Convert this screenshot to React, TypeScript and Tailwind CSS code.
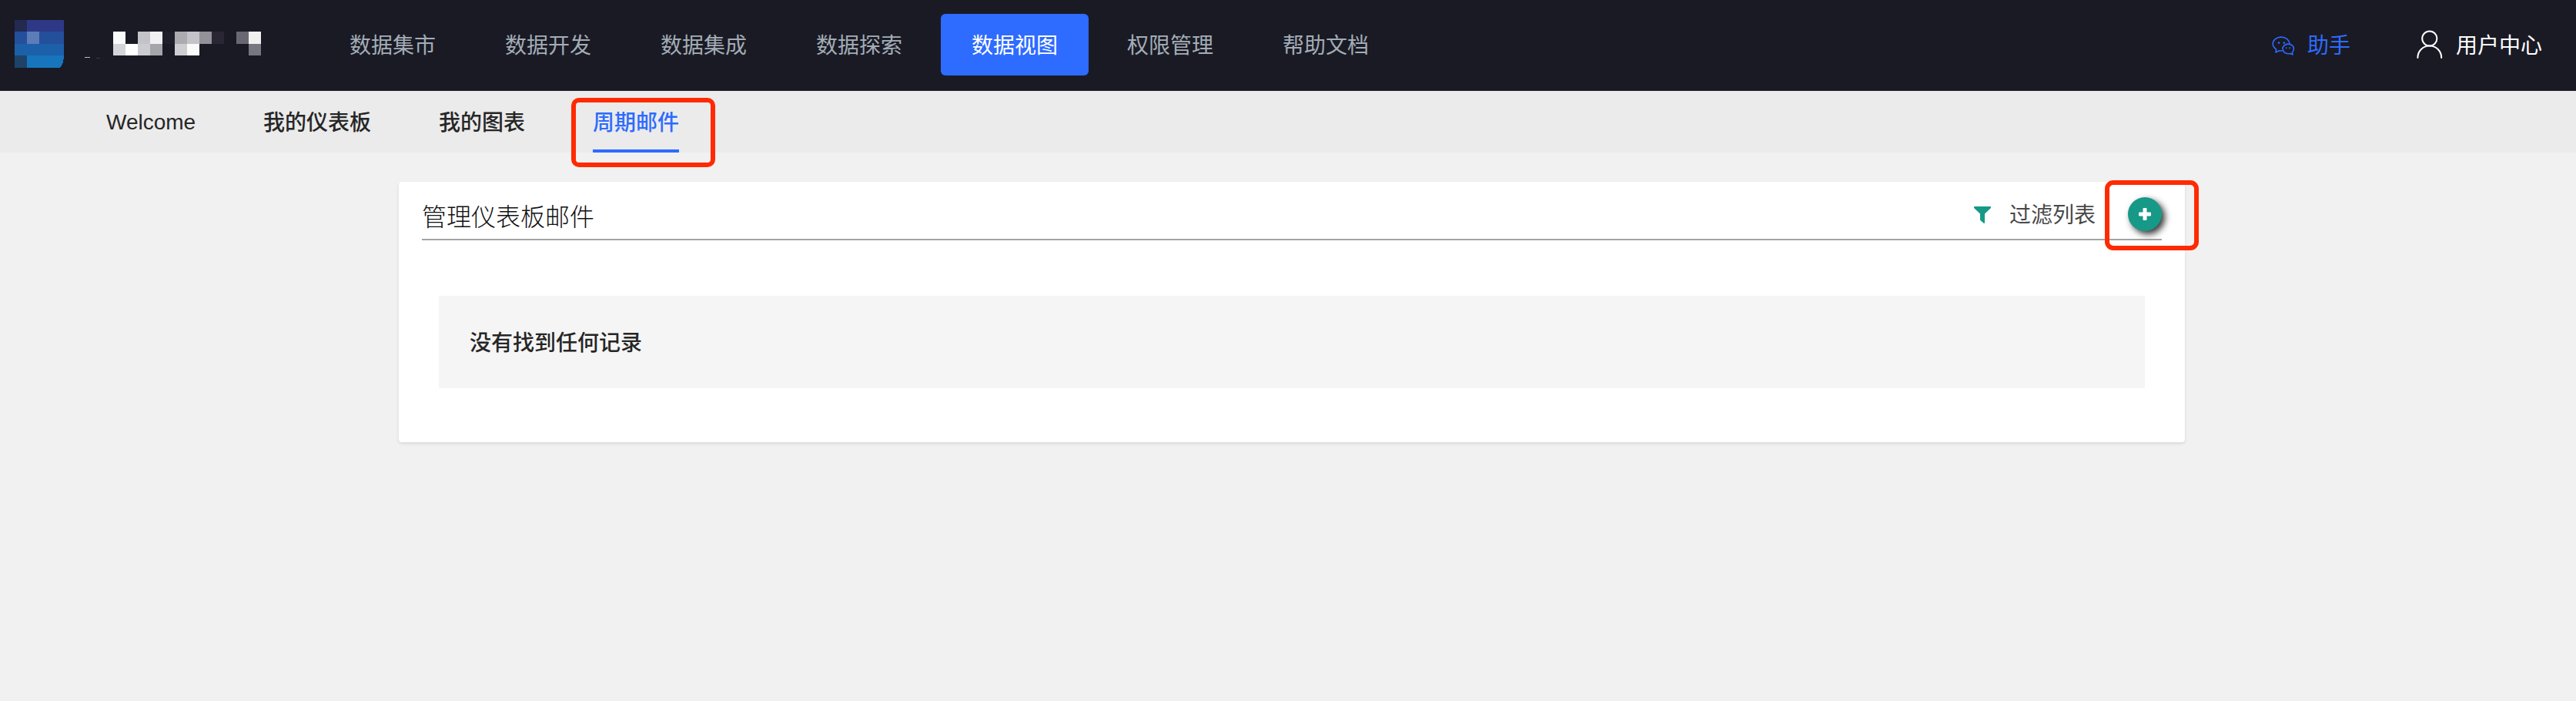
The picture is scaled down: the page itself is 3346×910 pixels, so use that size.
import React from "react";

const navItems = ["数据集市", "数据开发", "数据集成", "数据探索", "数据视图", "权限管理", "帮助文档"];
const activeNav = "数据视图";

function Logo() {
  return (
    <svg className="block h-[118px] w-[414px] shrink-0" viewBox="0 0 414 118" shapeRendering="crispEdges">
      <rect x="19" y="26" width="16" height="15" fill="#232a52" />
      <rect x="35" y="26" width="48" height="15" fill="#2d3987" />
      <rect x="19" y="41" width="64" height="16" fill="#244f9b" />
      <rect x="35" y="41" width="16" height="16" fill="#5d7db8" />
      <rect x="19" y="57" width="64" height="15" fill="#1d60aa" />
      <rect x="19" y="72" width="16" height="16" fill="#1d4468" />
      <path d="M35 72H83V74Q82 84 78 88H35Z" fill="#1675bd" />
      <rect x="110" y="74" width="7" height="1" fill="#b9b9bd" />
      <rect x="125" y="75" width="5" height="1" fill="#3b3b45" />
      <rect x="147" y="41" width="16" height="16" fill="#fafafa" />
      <rect x="179" y="41" width="16" height="16" fill="#c4c3c9" />
      <rect x="195" y="41" width="16" height="16" fill="#f0f0f3" />
      <rect x="147" y="57" width="16" height="15" fill="#d4d5d9" />
      <rect x="163" y="57" width="16" height="15" fill="#ffffff" />
      <rect x="179" y="57" width="16" height="15" fill="#cccbd0" />
      <rect x="195" y="57" width="16" height="15" fill="#a5a6ab" />
      <rect x="211" y="41" width="16" height="16" fill="#1f1e2b" />
      <rect x="227" y="41" width="16" height="16" fill="#ababb0" />
      <rect x="243" y="41" width="16" height="16" fill="#c4c3c9" />
      <rect x="259" y="41" width="16" height="16" fill="#93929b" />
      <rect x="275" y="41" width="16" height="16" fill="#282733" />
      <rect x="227" y="57" width="16" height="15" fill="#cecdd2" />
      <rect x="243" y="57" width="16" height="15" fill="#fafafa" />
      <rect x="307" y="41" width="16" height="16" fill="#696872" />
      <rect x="323" y="41" width="16" height="16" fill="#f0f0f0" />
      <rect x="323" y="57" width="16" height="15" fill="#777681" />
    </svg>
  );
}

function ChatIcon() {
  return (
    <svg className="block h-[28px] w-[30px]" viewBox="0 0 30 28" fill="none" stroke="#2e6bff" strokeWidth="1.6" strokeLinejoin="round">
      <path d="M13.6 20.8C12 21.2 10.6 21.1 9.6 20.8L5 23L5.6 18.9C2.8 17 1.2 14.7 1.2 12C1.2 6.9 6.2 3.1 12 3.1C18 3.1 22.6 6.9 23 11.8" />
      <path d="M21.2 12.1C17.2 12.1 14 14.9 14 18.3C14 21.9 17.2 24.8 21.2 24.8C22.2 24.8 23 24.7 23.8 24.4L27 25.8L26.4 23C27.8 21.8 28.4 20.1 28.4 18.3C28.4 14.9 25.2 12.1 21.2 12.1Z" />
      <g fill="#2e6bff" stroke="none">
        <circle cx="9" cy="10.6" r="1.3" />
        <circle cx="15.8" cy="10.6" r="1.3" />
        <circle cx="18.7" cy="17.3" r="1" />
        <circle cx="23" cy="17.3" r="1" />
      </g>
    </svg>
  );
}

function UserIcon() {
  return (
    <svg className="block h-[38px] w-[34px]" viewBox="0 0 34 38" fill="none" stroke="#fff" strokeWidth="2" strokeLinecap="round">
      <circle cx="16.8" cy="11" r="9.6" />
      <path d="M1.4 36C1.4 27.2 8.2 20.6 16.8 20.6S32.2 27.2 32.2 36" />
    </svg>
  );
}

function Header() {
  return (
    <header className="flex h-[118px] items-center bg-[#1a1a25] text-[28px] leading-10">
      <Logo />
      <nav className="flex gap-2.5 pb-0.5">
        {navItems.map((item) => (
          <a
            key={item}
            className={
              item === activeNav
                ? "flex h-20 w-48 items-center justify-center rounded-md bg-[#2e6bff] pt-[3px] text-white"
                : "flex h-20 w-48 items-center justify-center pt-[3px] text-[#a3adb5]"
            }
          >
            {item}
          </a>
        ))}
      </nav>
      <div className="ml-auto flex items-center pr-[44px]">
        <ChatIcon />
        <span className="ml-4 pt-px text-[#2e6bff]">助手</span>
        <span className="ml-[86px] pb-0.5">
          <UserIcon />
        </span>
        <span className="ml-[17px] pt-px text-white">用户中心</span>
      </div>
    </header>
  );
}

function Tabs() {
  return (
    <div className="flex h-20 gap-[88px] bg-[#ebebeb] pl-[138px] text-[28px] font-medium text-[#262626]">
      <a className="flex w-[116px] items-center pt-0.5 font-normal whitespace-nowrap">Welcome</a>
      <a className="flex items-center pt-[3px]">我的仪表板</a>
      <a className="flex items-center pt-[3px]">我的图表</a>
      <a className="relative flex items-center border-b-4 border-[#2e6bff] pt-[7px] text-[#2e6bff]">
        周期邮件
        <span className="absolute top-[9px] -left-7 h-[90px] w-[187px] rounded-[10px] border-6 border-[#ff2a00]" />
      </a>
    </div>
  );
}

function AddButton() {
  return (
    <button className="relative ml-[42px] flex size-11 items-center justify-center rounded-full bg-[#179987] shadow-[4px_4px_8px_rgba(0,0,0,0.8)]">
      <svg className="block size-4" viewBox="0 0 16 16" fill="#fff">
        <rect x="0" y="5.5" width="16" height="5" rx="1.2" />
        <rect x="5.5" y="0" width="5" height="16" rx="1.2" />
      </svg>
      <span className="absolute -top-[22px] -left-[30px] h-[91px] w-[122px] rounded-[11px] border-6 border-[#ff2a00]" />
    </button>
  );
}

export default function App() {
  return (
    <div className="min-h-[910px] w-full bg-[#f1f1f1] font-['Liberation_Sans','Noto_Sans_CJK_SC',sans-serif]">
      <Header />
      <Tabs />
      <main className="mt-[38px] ml-[518px] h-[338px] w-[2320px] rounded bg-white px-[30px] shadow-[0_2px_4px_rgba(0,0,0,0.1)]">
        <div className="flex h-[76px] items-center border-b-2 border-[#a3a3a3] pt-[18px] pb-[8px]">
          <h1 className="pt-[7px] text-[32px] leading-[40px] font-light text-[#111111]">管理仪表板邮件</h1>
          <div className="ml-auto flex items-center">
            <svg className="mt-0.5 block h-[22px] w-[22px]" viewBox="0 0 22 22" fill="#179987">
              <path d="M.8 0H21.2Q22 0 22 1V2L14 9.6V21.2Q14 22 13 22L8.6 18.2Q8 17.7 8 17V9.6L0 2V1Q0 0 .8 0Z" />
            </svg>
            <span className="ml-6 pt-1 text-[28px] leading-10 font-normal text-[#484848]">过滤列表</span>
            <AddButton />
          </div>
        </div>
        <div className="mx-[22px] mt-[72px] flex h-[120px] items-center bg-[#f5f5f5] pt-[3px] pl-10 text-[28px] font-medium text-[#262626]">
          没有找到任何记录
        </div>
      </main>
    </div>
  );
}
